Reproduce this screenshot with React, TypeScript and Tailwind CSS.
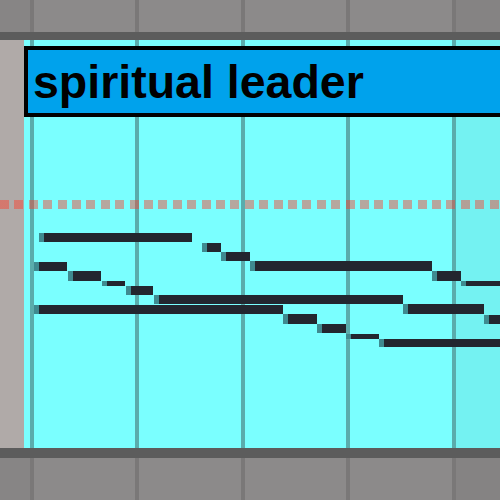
type Note = { x1: number; x2: number; y1: number; y2: number };

// page coordinates, y is shifted by the 40px header when drawn
const notes: Note[] = [
  { x1: 39, x2: 192, y1: 233, y2: 242 },
  { x1: 202, x2: 221, y1: 243, y2: 252 },
  { x1: 221, x2: 250, y1: 252, y2: 261 },
  { x1: 250, x2: 432, y1: 261, y2: 271 },
  { x1: 432, x2: 461, y1: 271, y2: 281 },
  { x1: 461, x2: 500, y1: 281, y2: 286 },
  { x1: 34, x2: 67, y1: 262, y2: 271 },
  { x1: 68, x2: 101, y1: 271, y2: 281 },
  { x1: 102, x2: 125, y1: 281, y2: 286 },
  { x1: 126, x2: 153, y1: 286, y2: 295 },
  { x1: 154, x2: 403, y1: 295, y2: 304 },
  { x1: 34, x2: 283, y1: 305, y2: 314 },
  { x1: 403, x2: 484, y1: 304, y2: 314 },
  { x1: 484, x2: 500, y1: 315, y2: 324 },
  { x1: 283, x2: 317, y1: 314, y2: 324 },
  { x1: 317, x2: 346, y1: 324, y2: 333 },
  { x1: 346, x2: 379, y1: 334, y2: 339 },
  { x1: 379, x2: 500, y1: 339, y2: 347 },
];

function Ruler({ h }: { h: string }) {
  return (
    <div className={`flex ${h} bg-[#8c8a8a]`}>
      <div className="w-[30px] bg-[#878585]" />
      <div className="w-[4px] bg-[#7a7878]" />
      <div className="w-[101px]" />
      <div className="w-[4px] bg-[#7a7878]" />
      <div className="w-[102px]" />
      <div className="w-[4px] bg-[#7a7878]" />
      <div className="w-[101px]" />
      <div className="w-[4px] bg-[#7a7878]" />
      <div className="w-[102px]" />
      <div className="w-[4px] bg-[#7a7878]" />
      <div className="flex-1 bg-[#858383]" />
    </div>
  );
}

export default function App() {
  return (
    <div className="w-[500px] h-[500px] overflow-hidden flex flex-col bg-[#8c8a8a]">
      <Ruler h="h-[32px]" />
      <div className="h-[8px] bg-[#5c5c5c]" />

      <div className="relative h-[408px] flex">
        <div className="w-[24px] bg-[#b0aaa8]" />
        <div className="w-[6px] bg-[#7affff]" />
        <div className="w-[4px] bg-[#5aacac]" />
        <div className="w-[101px] bg-[#7affff]" />
        <div className="w-[4px] bg-[#5aacac]" />
        <div className="w-[102px] bg-[#7affff]" />
        <div className="w-[4px] bg-[#5aacac]" />
        <div className="w-[101px] bg-[#7affff]" />
        <div className="w-[4px] bg-[#5aacac]" />
        <div className="w-[102px] bg-[#7affff]" />
        <div className="w-[4px] bg-[#5aacac]" />
        <div className="flex-1 bg-[#74f2f2]" />

        {/* clip header */}
        <div className="absolute left-[24px] top-[6px] w-[490px] h-[71px] border-4 border-black bg-[#00a2ec] pl-[5px] pt-[9px]">
          <span className="block font-['Liberation_Sans',Arial,sans-serif] font-bold text-[46.5px] leading-none text-black">
            spiritual leader
          </span>
        </div>

        {/* dotted marker line */}
        <div className="absolute left-0 right-0 top-[160px] h-[9px] bg-[repeating-linear-gradient(90deg,rgba(255,60,40,0.45)_0_9px,transparent_9px_14.4px)]" />

        {notes.map((n, i) => (
          <div
            key={i}
            className="absolute flex"
            style={{ left: n.x1, top: n.y1 - 40, width: n.x2 - n.x1, height: n.y2 - n.y1 }}
          >
            <div className="w-[5px] bg-[#3f8a90]" />
            <div className="flex-1 bg-[#23262f]" />
          </div>
        ))}
      </div>

      <div className="h-[10px] bg-[#5c5c5c]" />
      <Ruler h="flex-1" />
    </div>
  );
}
